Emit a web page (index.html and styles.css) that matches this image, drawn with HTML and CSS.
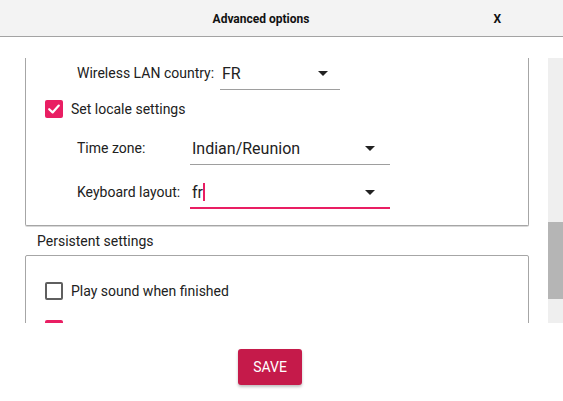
FILE: index.html
```html
<!DOCTYPE html>
<html>
<head>
<meta charset="utf-8">
<link rel="stylesheet" href="styles.css">
</head>
<body>
<div class="dialog">
  <header class="header">
    <div class="title">Advanced options</div>
    <div class="close">X</div>
  </header>
  <div class="spacer"></div>
  <div class="scroller">
    <div class="content">
      <div class="group group-top">
        <div class="row row-field">
          <span class="label label-wide">Wireless LAN country:</span>
          <div class="select select-short"><span class="value">FR</span><span class="arrow"></span></div>
        </div>
        <div class="row row-check check-locale">
          <span class="checkbox checked"><svg viewBox="0 0 18 18" width="18" height="18"><path d="M4.2 9.2 L7.6 12.4 L13.8 5.6" fill="none" stroke="#fff" stroke-width="2.2" stroke-linecap="round" stroke-linejoin="round"/></svg></span>
          <span class="check-text">Set locale settings</span>
        </div>
        <div class="row row-field row-tz">
          <span class="label label-narrow">Time zone:</span>
          <div class="select select-long"><span class="value">Indian/Reunion</span><span class="arrow arrow-long"></span></div>
        </div>
        <div class="row row-field row-kb">
          <span class="label label-narrow">Keyboard layout:</span>
          <div class="select select-long select-focus"><span class="value">fr<span class="caret"></span></span><span class="arrow arrow-long"></span></div>
        </div>
      </div>
      <div class="section-title">Persistent settings</div>
      <div class="group group-bottom">
        <div class="row row-check">
          <span class="checkbox"></span>
          <span class="check-text">Play sound when finished</span>
        </div>
        <div class="row row-check check-next">
          <span class="checkbox checked"></span>
          <span class="check-text">Eject media when finished</span>
        </div>
      </div>
    </div>
    <div class="scrollbar"><div class="thumb"></div></div>
  </div>
  <footer class="footer">
    <button class="save">SAVE</button>
  </footer>
</div>
</body>
</html>
```
FILE: styles.css
```css
html, body {
  margin: 0;
  padding: 0;
  background: #ffffff;
}
body {
  font-family: Roboto, "Noto Sans", sans-serif;
  color: #212121;
  width: 563px;
  height: 401px;
  overflow: hidden;
}
.dialog {
  display: flex;
  flex-direction: column;
  height: 401px;
}
.header {
  height: 36px;
  background: #f3f3f3;
  border-top: 1px solid #fafafa;
  border-bottom: 1px solid #a3a3a3;
  box-sizing: content-box;
  display: grid;
  grid-template-columns: 1fr auto 1fr;
  align-items: center;
  padding-right: 41px;
  flex: none;
  margin-top: -1px;
}
.title {
  grid-column: 2;
  font-size: 12px;
  font-weight: 700;
  color: #111;
  padding-top: 2px;
}
.close {
  grid-column: 3;
  justify-self: end;
  margin-right: 21px;
  font-size: 12px;
  font-weight: 700;
  color: #111;
  padding-top: 2px;
}
.spacer {
  height: 21px;
  flex: none;
}
.scroller {
  height: 265px;
  display: flex;
  flex: none;
  overflow: hidden;
}
.content {
  flex: 1;
  overflow: hidden;
  min-width: 0;
}
.scrollbar {
  width: 15px;
  background: #efefef;
  flex: none;
  padding-top: 164px;
  box-sizing: border-box;
}
.thumb {
  height: 77px;
  background: #b5b5b5;
}
.group {
  margin-left: 25px;
  margin-right: 19px;
  border: 1px solid #a6a6a6;
  border-radius: 2px;
  box-shadow: 0 1px 0 #d8d8d8;
}
.group-top {
  border-top: none;
  border-top-left-radius: 0;
  border-top-right-radius: 0;
  padding-bottom: 16px;
}
.group-bottom {
  padding-top: 26px;
  height: 200px;
}
.row {
  display: flex;
  align-items: center;
}
.row-field {
  padding-left: 51px;
}
.row-check {
  padding-left: 19px;
  height: 18px;
}
.check-locale {
  margin-top: 10px;
}
.row-tz {
  margin-top: 15px;
}
.row-kb {
  margin-top: 12px;
}
.check-next {
  margin-top: 20px;
}
.label {
  font-size: 14px;
  color: #212121;
  flex: none;
  padding-bottom: 2px;
}
.label-wide {
  width: 143px;
}
.label-narrow {
  width: 113px;
}
.select {
  height: 32px;
  box-sizing: border-box;
  border-bottom: 1px solid #9e9e9e;
  display: flex;
  align-items: center;
  justify-content: space-between;
  padding-left: 2px;
}
.select-short {
  width: 120px;
}
.select-long {
  width: 200px;
}
.select-focus {
  border-bottom: 2px solid #e91e63;
}
.value {
  font-size: 16px;
  color: #222;
  display: flex;
  align-items: center;
}
.caret {
  display: inline-block;
  width: 2px;
  height: 18px;
  background: #e91e63;
  margin-left: 0px;
}
.arrow {
  width: 0;
  height: 0;
  border-left: 5px solid transparent;
  border-right: 5px solid transparent;
  border-top: 5px solid #222;
  margin-right: 12px;
}
.arrow-long {
  margin-right: 15px;
}
.checkbox {
  width: 18px;
  height: 18px;
  box-sizing: border-box;
  border: 2px solid #5f5f5f;
  border-radius: 2px;
  flex: none;
  display: flex;
  align-items: center;
  justify-content: center;
}
.checkbox.checked {
  background: #e91e63;
  border: none;
}
.check-text {
  font-size: 14px;
  margin-left: 8px;
  color: #212121;
}
.section-title {
  font-size: 14px;
  height: 28px;
  line-height: 28px;
  padding-left: 37px;
  margin-top: 1px;
  color: #212121;
}
.footer {
  flex: 1;
  display: flex;
  justify-content: center;
  align-items: flex-start;
  padding-top: 26px;
  padding-right: 23px;
}
.save {
  width: 64px;
  height: 36px;
  background: #c51a4a;
  color: #ffffff;
  border: none;
  border-radius: 3px;
  font-family: Roboto, "Noto Sans", sans-serif;
  font-size: 14px;
  font-weight: 400;
  padding: 0;
  box-shadow: 0 2px 3px rgba(0,0,0,0.25);
}
```
